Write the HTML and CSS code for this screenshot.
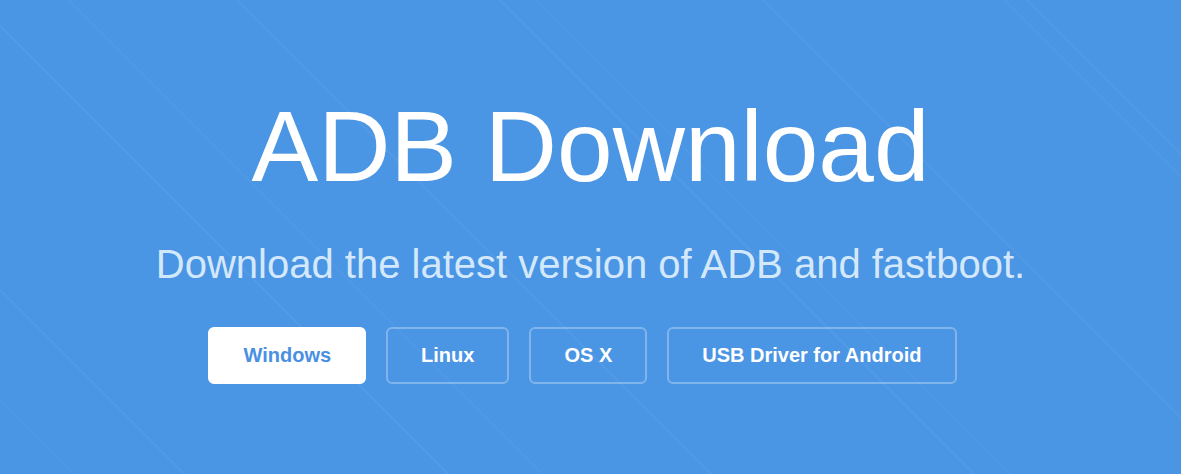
FILE: index.html
```html
<!DOCTYPE html>
<html lang="en">
<head>
    <meta charset="UTF-8">
    <meta name="viewport" content="width=device-width, initial-scale=1.0">
    <title>ADB Download</title>
    <link rel="stylesheet" href="styles.css">
</head>
<body>
    <section class="hero">
        <h1 class="hero-title">ADB Download</h1>
        <p class="hero-subtitle">Download the latest version of ADB and fastboot.</p>
        <div class="platforms">
            <a class="platform-btn active" href="#windows">Windows</a>
            <a class="platform-btn" href="#linux">Linux</a>
            <a class="platform-btn" href="#osx">OS X</a>
            <a class="platform-btn" href="#usb-driver">USB Driver for Android</a>
        </div>
    </section>
</body>
</html>
```

FILE: styles.css
```css
html, body {
    margin: 0;
    padding: 0;
}
body {
    font-family: 'Liberation Sans', Arial, sans-serif;
    background-color: #4a95e4;
    color: white;
}
.hero {
    min-height: 474px;
    box-sizing: border-box;
    padding-top: 91px;
    text-align: center;
    background-color: #4a95e4;
    background-image:
        repeating-linear-gradient(45deg, transparent 0, transparent 130px, rgba(255, 255, 255, 0.05) 130px, rgba(255, 255, 255, 0.05) 131.5px, transparent 131.5px, transparent 186px),
        repeating-linear-gradient(45deg, transparent 0, transparent 52px, rgba(255, 255, 255, 0.035) 52px, rgba(255, 255, 255, 0.035) 53px, transparent 53px, transparent 331px);
}
.hero-title {
    margin: 0;
    font-size: 100px;
    font-weight: normal;
    line-height: 110px;
}
.hero-subtitle {
    margin: 39px 0 0;
    font-size: 40px;
    line-height: 48px;
    color: #d4e8fb;
}
.platforms {
    display: flex;
    justify-content: center;
    gap: 20px;
    margin-top: 39px;
    padding-right: 16px;
}
.platform-btn {
    display: block;
    padding: 15px 33px;
    font-size: 20px;
    font-weight: bold;
    line-height: 23px;
    color: white;
    text-decoration: none;
    border: 2px solid rgba(255, 255, 255, 0.3);
    border-radius: 6px;
}
.platform-btn.active {
    background-color: white;
    border-color: white;
    color: #4a90e2;
}
```
